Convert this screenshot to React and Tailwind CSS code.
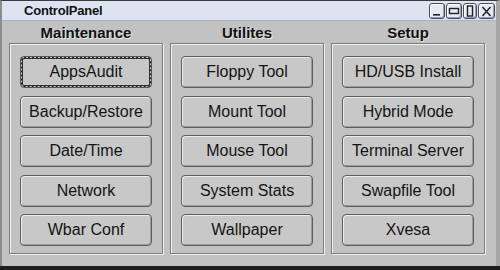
import React from "react";

const cols = [
  { title: "Maintenance", items: ["AppsAudit", "Backup/Restore", "Date/Time", "Network", "Wbar Conf"], w: "w-[154px]" },
  { title: "Utilites", items: ["Floppy Tool", "Mount Tool", "Mouse Tool", "System Stats", "Wallpaper"], w: "w-[154px]" },
  { title: "Setup", items: ["HD/USB Install", "Hybrid Mode", "Terminal Server", "Swapfile Tool", "Xvesa"], w: "w-[154px]" },
];

function WinBtn({ children, w }) {
  return (
    <div className={`h-[16px] ${w} rounded-[3px] border border-[#4a4d57] bg-[#e6eaf5] shadow-[inset_1px_1px_0_#ffffff,inset_-1px_-1px_0_#9aa0b0] flex items-center justify-center`}>
      {children}
    </div>
  );
}

export default function App() {
  return (
    <div className="w-[500px] h-[270px] bg-[#1e1e1e] overflow-hidden" style={{ fontFamily: '"Liberation Sans", Arial, sans-serif' }}>
      <div className="w-[500px] h-[266px] border-t border-[#3a3a3a] border-l-2 border-l-[#8c8c8c] border-r-[4px] border-r-[#a6a6a6] bg-[#c2c2c2] flex flex-col">
        {/* title bar */}
        <div className="h-[20px] bg-[#dde3f1] border-b border-[#aab0c0] flex items-center pl-[22px] pr-[1px] shrink-0">
          <span className="text-[13px] font-bold text-[#111] leading-none tracking-[-0.2px]">ControlPanel</span>
          <div className="ml-auto flex items-center gap-[1px] pt-[1px]">
            <WinBtn w="w-[16px]">
              <svg width="10" height="10" viewBox="0 0 10 10"><rect x="1" y="8" width="7" height="1.6" fill="#222" /></svg>
            </WinBtn>
            <WinBtn w="w-[16px]">
              <svg width="12" height="10" viewBox="0 0 12 10"><rect x="1.5" y="2.5" width="9" height="5" fill="none" stroke="#222" strokeWidth="1.4" /></svg>
            </WinBtn>
            <WinBtn w="w-[14px]">
              <svg width="8" height="12" viewBox="0 0 8 12"><rect x="1.5" y="1" width="5" height="10" fill="none" stroke="#222" strokeWidth="1.4" /></svg>
            </WinBtn>
            <WinBtn w="w-[17px]">
              <svg width="11" height="11" viewBox="0 0 11 11"><path d="M1.5 1 L9.5 10 M9.5 1 L1.5 10" stroke="#222" strokeWidth="1.5" /></svg>
            </WinBtn>
          </div>
        </div>
        {/* body */}
        <div className="flex gap-[7px] pl-[7px]">
          {cols.map((c, ci) => (
            <div key={c.title} className={`${c.w} flex flex-col`}>
              <div className="h-[22px] flex items-center justify-center">
                <span className="text-[15px] font-bold text-[#111] leading-none [text-shadow:1px_1px_0_#e6e6e6]">{c.title}</span>
              </div>
              <div className="h-[211px] border border-[#7c7c7c] shadow-[inset_1px_1px_0_#f2f2f2,1px_1px_0_#f2f2f2] pt-[12px] px-[10px] flex flex-col gap-[7.5px]">
                {c.items.map((it, i) => (
                  <div
                    key={it}
                    className={`h-[32px] rounded-[4px] bg-[#c8c8c8] flex items-center justify-center text-[16px] text-[#141414] leading-none ${
                      ci === 0 && i === 0
                        ? "border border-[#555] shadow-[inset_0_0_0_1px_#c8c8c8,inset_0_0_0_2px_#333]"
                        : "border border-[#5e5e5e] shadow-[inset_1px_1px_0_#ececec,inset_-1px_-1px_0_#9c9c9c]"
                    }`}
                  >
                    {ci === 0 && i === 0 ? (
                      <div className="w-full h-full rounded-[3px] border-2 border-dotted border-[#2a2a2a] flex items-center justify-center">{it}</div>
                    ) : (
                      it
                    )}
                  </div>
                ))}
              </div>
            </div>
          ))}
        </div>
      </div>
    </div>
  );
}
